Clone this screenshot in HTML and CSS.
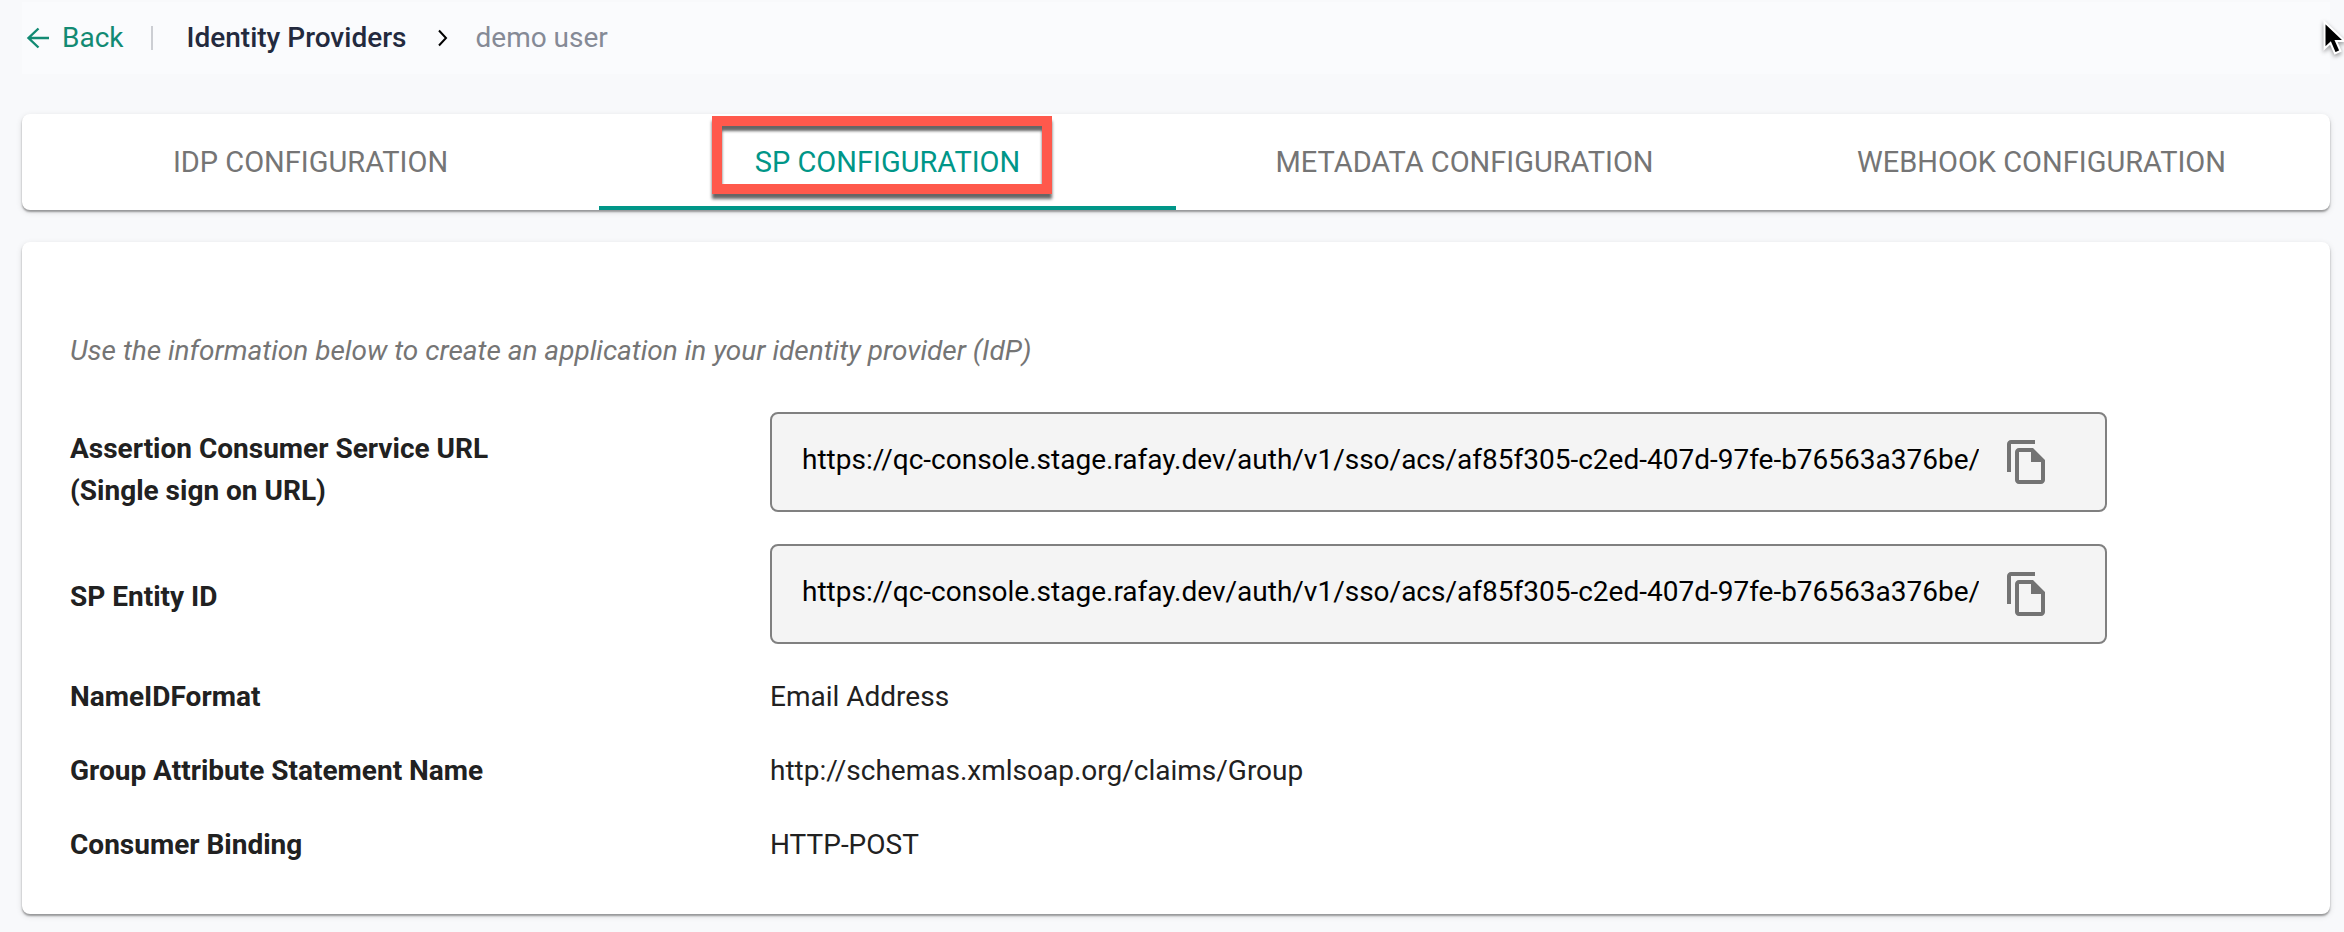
FILE: index.html
```html
<!DOCTYPE html>
<html lang="en">
<head>
<meta charset="utf-8">
<title>Identity Providers - SP Configuration</title>
<meta name="viewport" content="width=device-width, initial-scale=1">
<link rel="stylesheet" href="styles.css">
</head>
<body>
<nav class="breadcrumb" aria-label="Breadcrumb">
  <a class="back" href="#">
    <svg class="back-icon" viewBox="0 0 24 24" aria-hidden="true"><path d="M12.500 2.500 2.500 12l10 9.500M2.500 12h20.500"/></svg>
    Back
  </a>
  <span class="divider"></span>
  <a class="crumb" href="#">Identity Providers</a>
  <svg class="chevron" viewBox="0 0 12 18" aria-hidden="true"><path d="m2 1.500 7 7.500-7 7.500"/></svg>
  <span class="current">demo user</span>
</nav>

<main class="content">
  <div class="tabs card" role="tablist">
    <button class="tab" type="button" role="tab" aria-selected="false">IDP CONFIGURATION</button>
    <button class="tab tab-active" type="button" role="tab" aria-selected="true">SP CONFIGURATION<span class="highlight"></span></button>
    <button class="tab" type="button" role="tab" aria-selected="false">METADATA CONFIGURATION</button>
    <button class="tab" type="button" role="tab" aria-selected="false">WEBHOOK CONFIGURATION</button>
  </div>

  <section class="panel card">
    <p class="hint">Use the information below to create an application in your identity provider (IdP)</p>
    <div class="rows">
      <div class="row">
        <label class="name name-double" for="acs-url">Assertion Consumer Service URL<br>(Single sign on URL)</label>
        <div class="field">
          <input class="field-input" id="acs-url" type="text" readonly value="https://qc-console.stage.rafay.dev/auth/v1/sso/acs/af85f305-c2ed-407d-97fe-b76563a376be/">
          <button class="copy" type="button" aria-label="Copy Assertion Consumer Service URL">
            <svg class="copy-icon" viewBox="0 0 24 24" aria-hidden="true"><path d="M16 1H4c-1.100 0-2 .9-2 2v14h2V3h12V1zm-1 4H8c-1.100 0-1.990.9-1.990 2L6 21c0 1.100.89 2 1.990 2H19c1.100 0 2-.9 2-2V11l-6-6zM8 21V7h6v5h5v9H8z"/></svg>
          </button>
        </div>
      </div>
      <div class="row">
        <label class="name name-single" for="entity-id">SP Entity ID</label>
        <div class="field">
          <input class="field-input" id="entity-id" type="text" readonly value="https://qc-console.stage.rafay.dev/auth/v1/sso/acs/af85f305-c2ed-407d-97fe-b76563a376be/">
          <button class="copy" type="button" aria-label="Copy SP Entity ID">
            <svg class="copy-icon" viewBox="0 0 24 24" aria-hidden="true"><path d="M16 1H4c-1.100 0-2 .9-2 2v14h2V3h12V1zm-1 4H8c-1.100 0-1.990.9-1.990 2L6 21c0 1.100.89 2 1.990 2H19c1.100 0 2-.9 2-2V11l-6-6zM8 21V7h6v5h5v9H8z"/></svg>
          </button>
        </div>
      </div>
      <div class="row">
        <div class="name">NameIDFormat</div>
        <div class="value">Email Address</div>
      </div>
      <div class="row">
        <div class="name">Group Attribute Statement Name</div>
        <div class="value">http://schemas.xmlsoap.org/claims/Group</div>
      </div>
      <div class="row">
        <div class="name">Consumer Binding</div>
        <div class="value">HTTP-POST</div>
      </div>
    </div>
  </section>
</main>

<svg class="pointer" viewBox="0 0 22 36" aria-hidden="true"><path d="M1.500 2v26.500l6-5.500 4.500 10.500 5.500-2.500-4.500-10h8.500z"/></svg>
</body>
</html>
```

FILE: styles.css
```css
* {
  box-sizing: border-box;
}

body {
  position: relative;
  margin: 0;
  padding: 2px 14px 18px 22px;
  overflow-x: hidden;
  background: #f8f9fb;
  color: #212121;
  font: 28px/42px Roboto, sans-serif;
}

.breadcrumb {
  display: flex;
  align-items: center;
  height: 72px;
  padding: 0 4px;
  background: #fafbfd;
}

.breadcrumb a {
  text-decoration: none;
}

.back {
  display: flex;
  align-items: center;
  gap: 12px;
  color: #128a73;
}

.back-icon {
  width: 24px;
  height: 24px;
  fill: none;
  stroke: currentColor;
  stroke-width: 2.4;
}

.divider {
  width: 2px;
  height: 24px;
  margin: 0 34px 0 27px;
  background: #ccced3;
}

.crumb {
  color: #232a3e;
  font-weight: 500;
}

.chevron {
  width: 12px;
  height: 18px;
  margin: 0 27px 0 30px;
  fill: none;
  stroke: #000;
  stroke-width: 2;
}

.current {
  color: #858a96;
}

.content {
  display: grid;
  gap: 32px;
  margin-top: 40px;
}

.card {
  border-radius: 8px;
  background: #fff;
  box-shadow: 0 2px 2px rgba(0, 0, 0, 0.34), 0 2px 6px rgba(0, 0, 0, 0.12);
}

.tabs {
  display: grid;
  grid-template-columns: repeat(4, 1fr);
}

.tab {
  position: relative;
  height: 96px;
  padding: 0;
  border: 0;
  background: none;
  color: #757575;
  font: 29px/42px Roboto, sans-serif;
}

.tab-active {
  box-shadow: inset 0 -4px #009688;
  color: #009688;
}

.highlight {
  position: absolute;
  inset: 2px 124px 16px 113px;
  border: 10px solid #ff594c;
  box-shadow: 0 5px 3px rgba(0, 0, 0, 0.6), inset 0 5px 3px rgba(0, 0, 0, 0.6);
}

.panel {
  padding: 88px 48px 48px;
}

.hint {
  margin: 0 0 40px;
  color: #757575;
  font-style: italic;
}

.rows {
  display: grid;
  gap: 32px;
}

.row {
  display: grid;
  grid-template-columns: 700fr 1337fr 175fr;
  align-items: start;
}

.name {
  font-weight: 700;
}

.name-double {
  padding-top: 16px;
}

.name-single {
  padding-top: 32px;
}

.field {
  display: flex;
  align-items: center;
  height: 100px;
  padding: 0 30px;
  border: 2px solid #808080;
  border-radius: 8px;
  background: #f4f4f4;
}

.field-input {
  flex: 1;
  min-width: 0;
  padding: 0 0 4px;
  border: 0;
  outline: 0;
  background: none;
  color: #000;
  font: 28px/42px Roboto, sans-serif;
}

.copy {
  display: flex;
  padding: 24px;
  border: 0;
  background: none;
  color: #737373;
}

.copy-icon {
  width: 48px;
  height: 48px;
  fill: currentColor;
}

.pointer {
  position: absolute;
  top: 20px;
  right: -1px;
  width: 22px;
  height: 36px;
  fill: #000;
  stroke: #fff;
  stroke-width: 2;
  filter: drop-shadow(0 2px 2px rgba(0, 0, 0, 0.4));
}
```
